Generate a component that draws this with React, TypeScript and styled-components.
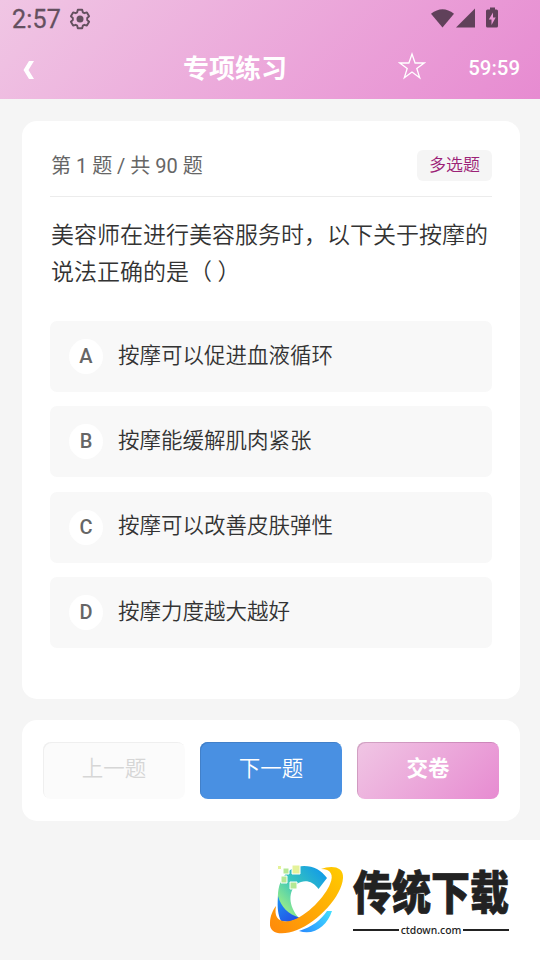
import React from "react";
import styled, { createGlobalStyle, css } from "styled-components";

const pinkGradient = "linear-gradient(135deg, #f0c6e4 0%, #e78bd1 100%)";

const GlobalStyle = createGlobalStyle`
  * { box-sizing: border-box; }
  body {
    margin: 0;
    background: #f5f5f5;
    font-family: Roboto, "Noto Sans CJK SC", sans-serif;
    color: #333;
  }
`;

const Screen = styled.div`
  position: relative;
  width: 540px;
  height: 960px;
  overflow: hidden;
  background: #f5f5f5;
`;

const Header = styled.header`
  height: 99px;
  background: ${pinkGradient};
`;

const StatusBar = styled.div`
  display: flex;
  align-items: center;
  height: 37px;
  padding: 0 42px 0 12px;
  color: #60415a;
`;

const Clock = styled.span`
  font-size: 25px;
  line-height: 37px;
  letter-spacing: 0.2px;
  padding-top: 2px;
  width: 57px;
  color: #64505f;
  -webkit-text-stroke: 0.3px currentColor;
  white-space: nowrap;
`;

const GearIcon = styled.svg`
  color: #64505f;
`;

const StatusIcons = styled.div`
  display: flex;
  margin-left: auto;
`;

const NavBar = styled.nav`
  display: grid;
  grid-template-columns: 183px 1fr 28px 43px 52px;
  align-items: center;
  height: 62px;
  padding: 0 20px 0 0;
  color: #fff;
`;

const BackIcon = styled.svg`
  margin: 4px 0 0 23px;
`;

const Title = styled.h1`
  margin: 2px 0 0;
  font-size: 26px;
  font-weight: 700;
  line-height: 38px;
`;

const StarIcon = styled.svg`
  margin: -5px 0 0 1px;
`;

const Timer = styled.span`
  grid-column: 5;
  justify-self: end;
  font-size: 20.4px;
  font-weight: 500;
  white-space: nowrap;
`;

const Card = styled.section`
  width: 498px;
  margin-left: 22px;
  border-radius: 15px;
  background: #fff;
`;

const QuestionCard = styled(Card)`
  height: 578px;
  margin-top: 22px;
  padding: 29px 28px 0;
`;

const QuestionMeta = styled.div`
  display: flex;
  justify-content: space-between;
  height: 47px;
  border-bottom: 1px solid #ececec;
`;

const Progress = styled.span`
  padding: 1px 0 0 1px;
  font-size: 20px;
  line-height: 31px;
  color: #666;
`;

const TypeTag = styled.span`
  width: 75px;
  height: 31px;
  border-radius: 6px;
  background: #f5f5f5;
  color: #9c2277;
  font-size: 17px;
  font-weight: 350;
  line-height: 31px;
  text-align: center;
`;

const Question = styled.p`
  margin: 20px 0 30px 1px;
  font-size: 23px;
  font-weight: 350;
  line-height: 37px;
  white-space: nowrap;
`;

const OptionList = styled.div`
  display: grid;
  gap: 14.4px;
`;

const Option = styled.div`
  display: flex;
  align-items: center;
  height: 71px;
  padding-left: 19px;
  border-radius: 7px;
  background: #f8f8f8;
`;

const Letter = styled.span`
  width: 34px;
  height: 35px;
  border-radius: 50%;
  background: #fff;
  color: #666;
  font-size: 20px;
  font-weight: 500;
  line-height: 35px;
  text-align: center;
`;

const OptionText = styled.span`
  margin: -2px 0 0 15px;
  font-size: 21.5px;
  font-weight: 350;
  line-height: 32px;
`;

const ActionCard = styled(Card)`
  display: grid;
  grid-template-columns: repeat(3, 142px);
  gap: 15px;
  height: 101px;
  margin-top: 21px;
  padding: 22px 21px;
`;

type Kind = "disabled" | "primary" | "submit";

const kinds = {
  disabled: css`
    background: #fbfbfb;
    color: #d6d6d6;
    box-shadow: inset 1px 1px #efefef;
  `,
  primary: css`
    background: #4990e2;
    color: #fff;
    box-shadow: inset 1px 1px #4280c9;
  `,
  submit: css`
    background: ${pinkGradient};
    color: #fff;
    font-weight: 700;
    box-shadow: inset 1px 1px rgba(120, 60, 100, 0.25);
  `,
};

const ActionButton = styled.button<{ $kind: Kind }>`
  height: 57px;
  padding: 0 0 8px;
  border: 0;
  border-radius: 8px;
  font-family: inherit;
  font-size: 21.5px;
  font-weight: 350;
  ${({ $kind }) => kinds[$kind]}
`;

const Watermark = styled.aside`
  position: absolute;
  right: 0;
  bottom: 0;
  display: flex;
  width: 280px;
  height: 120px;
  background: #fff;
`;

const Brand = styled.div`
  width: 156px;
  margin-left: -7px;
  padding-top: 29px;
  color: #222;
`;

const BrandName = styled.div`
  height: 40px;
  margin-bottom: 14px;
  font-family: "Noto Sans CJK SC", sans-serif;
  font-size: 39px;
  font-weight: 900;
  line-height: 40px;
  white-space: nowrap;
  transform: scaleY(1.18);
  -webkit-text-stroke: 0.6px #222;
`;

const BrandSite = styled.div`
  display: flex;
  align-items: center;
  gap: 2px;
  height: 14px;
  font-family: "Noto Sans", sans-serif;
  font-size: 10.4px;
  font-weight: 500;
  line-height: 14px;

  &::before,
  &::after {
    content: "";
    flex: 1;
    height: 2px;
    background: #222;
  }
`;

const options = [
  ["A", "按摩可以促进血液循环"],
  ["B", "按摩能缓解肌肉紧张"],
  ["C", "按摩可以改善皮肤弹性"],
  ["D", "按摩力度越大越好"],
];

function Gear() {
  return (
    <GearIcon width="22" height="22" viewBox="0 0 22 22" fill="none" stroke="currentColor" strokeWidth="1.9" strokeLinejoin="round">
      <path d="M8.800 1.800h4.400l.6 2.500 1.600.9 2.500-.8 2.200 3.800-1.900 1.800v2l1.900 1.800-2.200 3.800-2.500-.8-1.600.9-.6 2.500H8.800l-.6-2.500-1.600-.9-2.500.8-2.200-3.800 1.900-1.800v-2L1.900 8.200l2.200-3.800 2.500.8 1.600-.9z" />
      <circle cx="11" cy="11" r="3.500" fill="currentColor" stroke="none" />
    </GearIcon>
  );
}

function DeviceIcons() {
  return (
    <svg width="68" height="24" viewBox="0 0 68 24" fill="currentColor">
      <path d="M1 6.800Q12.500-2.500 24 6.800L12.500 20.500z" />
      <path d="M45 1.500v19H26z" />
      <path fillRule="evenodd" d="M60 .5h5v2h1.500Q68 2.500 68 4V19Q68 20.500 66.500 20.500H57.500Q56 20.500 56 19V4Q56 2.500 57.500 2.500H60zM63 5.500l-4.200 7H61.500V18l4.200-7.500H63z" />
    </svg>
  );
}

function SwooshLogo() {
  return (
    <svg width="100" height="120" viewBox="0 0 100 120">
      <defs>
        <linearGradient id="arc" x1="24" y1="66" x2="62" y2="32" gradientUnits="userSpaceOnUse">
          <stop stopColor="#8ee88e" />
          <stop offset=".45" stopColor="#37c5bc" />
          <stop offset="1" stopColor="#149de6" />
        </linearGradient>
        <linearGradient id="fold" x1="18" y1="60" x2="35" y2="81" gradientUnits="userSpaceOnUse">
          <stop stopColor="#1c8df2" />
          <stop offset="1" stopColor="#2450e5" />
        </linearGradient>
        <linearGradient id="ring" x1="80" y1="28" x2="14" y2="92" gradientUnits="userSpaceOnUse">
          <stop stopColor="#ffca00" />
          <stop offset="1" stopColor="#ff8b0a" />
        </linearGradient>
        <linearGradient id="wave" x1="71" y1="72" x2="42" y2="92" gradientUnits="userSpaceOnUse">
          <stop stopColor="#42ddff" />
          <stop offset="1" stopColor="#288dff" />
        </linearGradient>
      </defs>
      <path fill="url(#arc)" d="M18 60C17 39 28 26 44 26C54 26 61 30 67 38L58.500 49C53 41 44 39 37 44C28 51 28 66 39 78L30 79C22 75 18 69 18 60z" />
      <path fill="url(#fold)" d="M18 56C21 67 28 74 40 78L29 82L21 81C18 75 17 68 18 56z" />
      <path fill="url(#wave)" d="M39 91C52 87 61 80 67 71H72C67 86 54 96 39 91z" />
      <path fill="url(#ring)" d="M61 29C71 25 84 26 83 38C82 56 58 82 37 90C22 96 9 94 10 83C10 76 13 70 16 66C14 77 18 83 30 81C47 77 66 55 70 44C74 35 71 29 61 29z" />
      <g stroke="#fff" strokeWidth="1">
        <path fill="#e4f299" d="M32 25h8v9h-8z" />
        <path fill="#b4e894" d="M23 28h6v6h-6zM21 36h6v7h-6zM30 42h7v7h-7z" />
        <path fill="#e4f299" d="M17.500 25.500h4v4h-4z" />
      </g>
    </svg>
  );
}

export default function App() {
  return (
    <>
      <GlobalStyle />
      <Screen>
        <Header>
          <StatusBar>
            <Clock>2:57</Clock>
            <Gear />
            <StatusIcons><DeviceIcons /></StatusIcons>
          </StatusBar>
          <NavBar>
            <BackIcon width="12" height="18" viewBox="0 0 12 18"><path fill="#fff" d="M6 0h5L5.500 9 11 18H6L.5 9z" /></BackIcon>
            <Title>专项练习</Title>
            <StarIcon width="28" height="28" viewBox="0 0 28 28" fill="none" stroke="#fff" strokeWidth="1.3">
              <path d="M14 2l3.100 9h9.100l-7.400 5.500 2.900 9.200-7.700-5.700-7.700 5.700 2.900-9.200L1.800 11h9.100z" />
            </StarIcon>
            <Timer>59:59</Timer>
          </NavBar>
        </Header>
        <QuestionCard>
          <QuestionMeta>
            <Progress>第 1 题 / 共 90 题</Progress>
            <TypeTag>多选题</TypeTag>
          </QuestionMeta>
          <Question>美容师在进行美容服务时，以下关于按摩的<br />说法正确的是（ ）</Question>
          <OptionList>
            {options.map(([letter, text]) => (
              <Option key={letter}><Letter>{letter}</Letter><OptionText>{text}</OptionText></Option>
            ))}
          </OptionList>
        </QuestionCard>
        <ActionCard>
          <ActionButton $kind="disabled" disabled>上一题</ActionButton>
          <ActionButton $kind="primary">下一题</ActionButton>
          <ActionButton $kind="submit">交卷</ActionButton>
        </ActionCard>
        <Watermark>
          <SwooshLogo />
          <Brand>
            <BrandName>传统下载</BrandName>
            <BrandSite>ctdown.com</BrandSite>
          </Brand>
        </Watermark>
      </Screen>
    </>
  );
}
